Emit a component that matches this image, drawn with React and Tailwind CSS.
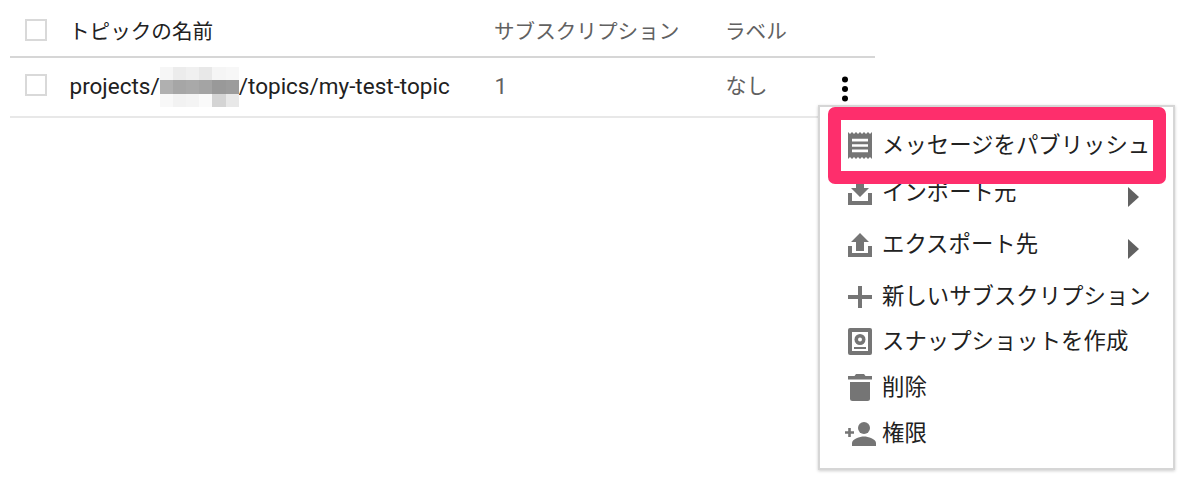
import React from "react";

const font = "font-['Roboto','Noto_Sans_CJK_JP',sans-serif]";

// mosaic over the hidden project id
const mosaic = [
  "bg-[#f6f6f6]", "bg-[#ececec]", "bg-[#f0f0f0]", "bg-[#e8e8e8]", "bg-[#f5f5f5]", "bg-[#f7f7f7]",
  "bg-[#b0b0b0]", "bg-[#a6a6a6]", "bg-[#a9a9a9]", "bg-[#a4a4a4]", "bg-[#999999]", "bg-[#9c9c9c]",
  "bg-[#f8f8f8]", "bg-[#f2f2f2]", "bg-[#f4f4f4]", "bg-[#fafafa]", "bg-[#d4d4d4]", "bg-[#e8e8e8]",
];

function Checkbox({ cls }) {
  return <div className={`w-[22px] h-[22px] border-2 border-[#d9d9d9] bg-white shrink-0 ${cls}`} />;
}

function Kebab() {
  return (
    <svg width="10" height="28" viewBox="0 0 10 28" className="text-black">
      <circle cx="5" cy="4.5" r="3" fill="currentColor" />
      <circle cx="5" cy="14" r="3" fill="currentColor" />
      <circle cx="5" cy="23.5" r="3" fill="currentColor" />
    </svg>
  );
}

function ReceiptIcon() {
  return (
    <svg width="24" height="27" viewBox="3 2 18 20" preserveAspectRatio="none" fill="#757575">
      <path d="M18 17H6v-2h12v2zm0-4H6v-2h12v2zm0-4H6V7h12v2zM3 22l1.5-1.5L6 22l1.5-1.5L9 22l1.5-1.5L12 22l1.5-1.5L15 22l1.5-1.5L18 22l1.5-1.5L21 22V2l-1.5 1.5L18 2l-1.5 1.5L15 2l-1.5 1.5L12 2l-1.5 1.5L9 2 7.5 3.5 6 2 4.5 3.5 3 2v20z" />
    </svg>
  );
}

function ImportIcon() {
  return (
    <svg width="24" height="24" viewBox="0 0 24 24" fill="#757575">
      <path d="M8 0h8v7h5l-9 9-9-9h5z" />
      <path d="M0 12h4v8h16v-8h4v12H0z" />
    </svg>
  );
}

function ExportIcon() {
  return (
    <svg width="24" height="24" viewBox="0 0 24 24" fill="#757575">
      <path d="M12 0l9 9h-5v9H8V9H3z" />
      <path d="M0 13h4v7h16v-7h4v11H0z" />
    </svg>
  );
}

function PlusIcon() {
  return (
    <svg width="24" height="24" viewBox="0 0 24 24" fill="#757575">
      <path d="M10 1h4v9h10v4H14v9h-4v-9H0v-4h10z" />
    </svg>
  );
}

function SnapshotIcon() {
  return (
    <svg width="24" height="27" viewBox="0 0 24 27">
      <rect width="24" height="27" rx="2" fill="#757575" />
      <rect x="4" y="4" width="16" height="19" fill="#fff" />
      <circle cx="12" cy="11.5" r="5.5" fill="#757575" />
      <circle cx="12" cy="11.5" r="2" fill="#fff" />
      <rect x="6" y="19" width="12" height="2" fill="#757575" />
    </svg>
  );
}

function TrashIcon() {
  return (
    <svg width="24" height="27" viewBox="0 0 24 27" fill="#757575">
      <path d="M8 0h8l1.5 2H24v3.5H0V2h6.5z" />
      <path d="M2 8h20v16.500a2.500 2.500 0 0 1-2.500 2.500h-15A2.500 2.500 0 0 1 2 24.500z" />
    </svg>
  );
}

function PersonAddIcon() {
  return (
    <svg width="31" height="24" viewBox="0 0 31 24" fill="#757575" className="shrink-0">
      <circle cx="19" cy="6" r="6" />
      <path d="M7 24v-3c0-4 8-6.500 12-6.500S31 17 31 21v3z" />
      <path d="M3.200 6h2.600v3.200H9v2.600H5.800v3.200H3.200v-3.200H0V9.200h3.200z" />
    </svg>
  );
}

function Caret() {
  return (
    <svg width="11" height="20" viewBox="0 0 11 20" fill="#616161">
      <path d="M0 0l11 10L0 20z" />
    </svg>
  );
}

const items = [
  { label: "メッセージをパブリッシュ", icon: <ReceiptIcon />, cls: "" },
  { label: "インポート元", icon: <ImportIcon />, cls: "mt-[2px]", caret: true },
  { label: "エクスポート先", icon: <ExportIcon />, cls: "mt-[7px]", caret: true },
  { label: "新しいサブスクリプション", icon: <PlusIcon />, cls: "mt-[7px]" },
  { label: "スナップショットを作成", icon: <SnapshotIcon />, cls: "" },
  { label: "削除", icon: <TrashIcon />, cls: "mt-[1px]" },
  { label: "権限", icon: <PersonAddIcon />, cls: "mt-[1px]" },
];

export default function App() {
  return (
    <div className={`relative w-[1200px] h-[496px] bg-white overflow-hidden px-[10px] ${font}`}>
      <div className="w-[865px]">
        <div className="flex items-center h-[58px] border-b-2 border-[#d6d6d6] pl-[15px] text-[20.6px] text-[#616161]">
          <Checkbox cls="mt-[3px]" />
          <div className="ml-[22px] w-[425px] pt-[8px] text-[#212121]">トピックの名前</div>
          <div className="w-[231px] pt-[8px]">サブスクリプション</div>
          <div className="pt-[8px]">ラベル</div>
        </div>
        <div className="flex items-center h-[60px] border-b-2 border-[#e8e8e8] pl-[15px] text-[22.5px] text-[#616161]">
          <Checkbox cls="-mt-[4px]" />
          <div className="ml-[22.5px] w-[425px] flex items-center text-[#212121]">
            <span>projects/</span>
            <div className="grid grid-cols-6 w-[79px] h-[40px] blur-[0.5px]">
              {mosaic.map((c, i) => <div key={i} className={c} />)}
            </div>
            <span>/topics/my-test-topic</span>
          </div>
          <div className="w-[231px]">1</div>
          <div className="w-[114px] text-[21px]">なし</div>
          <div className="mt-[4px]"><Kebab /></div>
        </div>
      </div>

      {/* popup menu */}
      <div className="absolute left-[818px] top-[105px] w-[357px] h-[365px] bg-white border-2 border-[#d6d6d6] shadow-[0_1px_3px_rgba(0,0,0,0.2)] pt-[16px] text-[22.4px] text-[#212121]">
        {items.map(it => (
          <div key={it.label} className={`flex items-center relative h-[45px] pl-[28px] ${it.cls}`}>
            <div className="w-[24px] flex justify-center shrink-0">{it.icon}</div>
            <span className="ml-[10px] whitespace-nowrap">{it.label}</span>
            {it.caret && <div className="absolute left-[308px] top-[17px]"><Caret /></div>}
          </div>
        ))}
        <div className="absolute left-[8px] top-[0px] w-[338px] h-[77px] border-[13px] border-[#fe2e6c] rounded-[7px]" />
      </div>
    </div>
  );
}
